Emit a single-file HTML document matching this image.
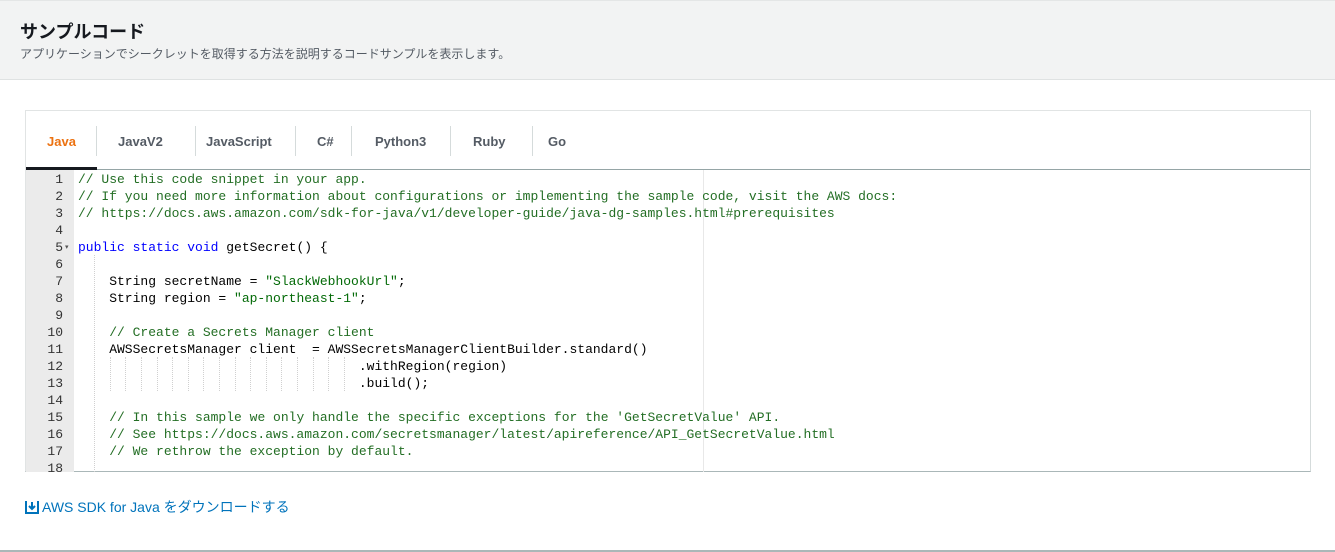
<!DOCTYPE html>
<html><head><meta charset="utf-8"><style>
*{margin:0;padding:0;box-sizing:border-box}
body{width:1335px;height:552px;background:#fff;font-family:"Liberation Sans","Noto Sans CJK JP",sans-serif;position:relative;overflow:hidden}
.hd{position:absolute;left:0;top:0;width:1335px;height:80px;background:#f2f3f3;border-top:1px solid #e4e6e6;border-bottom:1px solid #dfe2e2}
.hd h2{position:absolute;left:20px;top:17px;font-size:18px;font-weight:bold;color:#16191f}
.hd p{position:absolute;left:20px;top:44px;font-size:12px;color:#545b64}
.card{position:absolute;left:25px;top:110px;width:1286px;height:362px;border:1px solid #e1e4e4;border-right:1px solid #d5dbdb;border-bottom:1px solid #aab7b8;background:#fff}
.tab{position:absolute;top:23px;font-size:13px;font-weight:bold;color:#545b64}
.sep{position:absolute;top:15px;width:1px;height:30px;background:#d5dbdb}
.tline{position:absolute;left:0;top:58px;width:1284px;height:1px;background:#95a5a6}
.act{position:absolute;left:0;top:56px;width:71px;height:3px;background:#16191f}
.code{position:absolute;left:0;top:59px;width:1284px;height:302px;overflow:hidden}
.gut{position:absolute;left:0;top:0;width:48px;height:302px;background:#ebebeb}
.ln{position:absolute;left:0;width:37px;text-align:right;font:13px/17px "Liberation Mono",monospace;color:#333}
.l{position:absolute;left:52px;white-space:pre;font:13px/17px "Liberation Mono",monospace;color:#000}
.c{color:#236e24}.k{color:#0000ff}.s{color:#036a07}
.pm{position:absolute;left:677px;top:0;width:1px;height:302px;background:#e8e8e8}
.ig{position:absolute;width:0;border-left:1px dotted #d0d0d0}
.dl{position:absolute;left:25px;top:497px;font-size:14px;color:#0073bb}
.bot{position:absolute;left:0;top:550px;width:1335px;height:2px;background:#aab7b8}
</style></head><body>
<div class="hd"><h2>サンプルコード</h2><p>アプリケーションでシークレットを取得する方法を説明するコードサンプルを表示します。</p></div>
<div class="card">
<span class="tab" style="left:21px;color:#ec7211">Java</span><div class="sep" style="left:70px"></div>
<span class="tab" style="left:92px">JavaV2</span><div class="sep" style="left:169px"></div>
<span class="tab" style="left:180px">JavaScript</span><div class="sep" style="left:269px"></div>
<span class="tab" style="left:291px">C#</span><div class="sep" style="left:325px"></div>
<span class="tab" style="left:349px">Python3</span><div class="sep" style="left:424px"></div>
<span class="tab" style="left:447px">Ruby</span><div class="sep" style="left:506px"></div>
<span class="tab" style="left:522px">Go</span>
<div class="tline"></div><div class="act"></div>
<div class="code">
<div class="gut"></div><div class="pm"></div>
<div class="ig" style="left:68px;top:85px;height:217px"></div>
<div class="ig" style="left:84px;top:187px;height:34px"></div><div class="ig" style="left:99px;top:187px;height:34px"></div><div class="ig" style="left:115px;top:187px;height:34px"></div><div class="ig" style="left:131px;top:187px;height:34px"></div><div class="ig" style="left:146px;top:187px;height:34px"></div><div class="ig" style="left:162px;top:187px;height:34px"></div><div class="ig" style="left:177px;top:187px;height:34px"></div><div class="ig" style="left:193px;top:187px;height:34px"></div><div class="ig" style="left:209px;top:187px;height:34px"></div><div class="ig" style="left:224px;top:187px;height:34px"></div><div class="ig" style="left:240px;top:187px;height:34px"></div><div class="ig" style="left:255px;top:187px;height:34px"></div><div class="ig" style="left:271px;top:187px;height:34px"></div><div class="ig" style="left:287px;top:187px;height:34px"></div><div class="ig" style="left:302px;top:187px;height:34px"></div><div class="ig" style="left:318px;top:187px;height:34px"></div>
<div class="ln" style="top:1px">1<br>2<br>3<br>4<br>5<br>6<br>7<br>8<br>9<br>10<br>11<br>12<br>13<br>14<br>15<br>16<br>17<br>18</div>
<span style="position:absolute;left:39px;top:73px;font-size:7px;color:#555">▾</span>
<div class="l" style="top:1px"><span class="c">// Use this code snippet in your app.
// If you need more information about configurations or implementing the sample code, visit the AWS docs:
// https://docs.aws.amazon.com/sdk-for-java/v1/developer-guide/java-dg-samples.html#prerequisites</span>

<span class="k">public static void</span> getSecret() {

    String secretName = <span class="s">"SlackWebhookUrl"</span>;
    String region = <span class="s">"ap-northeast-1"</span>;

    <span class="c">// Create a Secrets Manager client</span>
    AWSSecretsManager client  = AWSSecretsManagerClientBuilder.standard()
                                    .withRegion(region)
                                    .build();

    <span class="c">// In this sample we only handle the specific exceptions for the 'GetSecretValue' API.
    // See https://docs.aws.amazon.com/secretsmanager/latest/apireference/API_GetSecretValue.html
    // We rethrow the exception by default.</span>
</div>
</div>
</div>
<div class="dl"><svg width="14" height="14" viewBox="0 0 14 14" style="vertical-align:-2px;margin-right:3px"><path d="M1 1v12h12V1" fill="none" stroke="#0073bb" stroke-width="2"/><path d="M7 2v7M4 6l3 3 3-3" fill="none" stroke="#0073bb" stroke-width="2"/></svg>AWS SDK for Java をダウンロードする</div>
<div class="bot"></div>
</body></html>
